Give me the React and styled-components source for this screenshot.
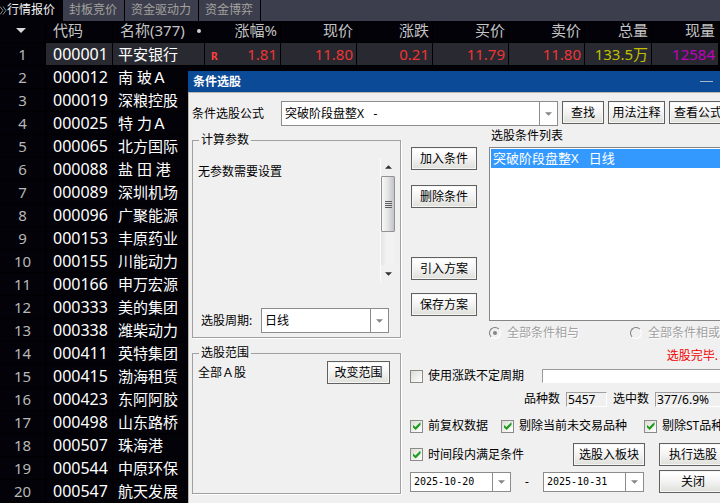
import React from "react";
import styled, { createGlobalStyle, css } from "styled-components";

const Global = createGlobalStyle`
  *, *::before, *::after { box-sizing: border-box; }
  body {
    margin: 0;
    background: #020208;
    font-family: "Noto Sans", "Noto Sans CJK SC", sans-serif;
    font-size: 12px;
    line-height: 16px;
    overflow: hidden;
  }
  button, input, select { font: inherit; color: inherit; margin: 0; }
`;

const Desktop = styled.div`
  position: relative;
  height: 100vh;
  overflow: hidden;
  background: #020208;
`;

/* ---------- quote board ---------- */

const TabBar = styled.nav`
  display: flex;
  gap: 1px;
  height: 21px;
  background: #000;
`;

const Tab = styled.button`
  display: flex;
  align-items: center;
  flex: none;
  height: 21px;
  padding: 0 7px 1px 6px;
  border: 0;
  white-space: nowrap;
  background: ${(p) => (p.$active ? "#020208" : "#3c3e4d")};
  color: ${(p) => (p.$active ? "#f4f4f4" : "#a2a29e")};
  ${(p) => p.$active && css`padding: 0 7px 1px 0;`}
`;

const TabFill = styled.div`
  flex: 1;
  background: #3c3e4d;
`;

const Board = styled.table`
  width: 100%;
  table-layout: fixed;
  border-collapse: separate;
  border-spacing: 0;
  font-size: 15px;
  line-height: 20px;
  color: #fff;
`;

const Col = styled.col`
  width: ${(p) => p.$w}px;
`;

const cell = css`
  height: 23px;
  padding: 0 3px 0 ${(p) => p.$pad || 0}px;
  border-right: 1px solid #000;
  border-bottom: 1px solid #000;
  text-align: ${(p) => p.$align || "left"};
  font-weight: 400;
  white-space: nowrap;
`;

const HeadCell = styled.th`
  ${cell}
  height: 22px;
  padding-bottom: 2px;
  line-height: 19px;
  color: #c4c4c4;
`;

const SortMark = styled.svg`
  display: block;
  margin: 0 auto;
`;

const Cell = styled.td`
  ${cell}
  color: ${(p) => p.$color || "#fff"};
  background: ${(p) => (p.$lit ? "#292a31" : "transparent")};
`;

const IndexCell = styled(Cell)`
  padding: 0;
  text-align: center;
  color: #b8b8b8;
`;

const CodeCell = styled(Cell)`
  font-size: 16px;
`;

const HeadSplit = styled.span`
  display: flex;
  align-items: center;
  justify-content: space-between;
`;

const Dot = styled.i`
  width: 4px;
  height: 4px;
  border-radius: 2px;
  background: #d0d0d0;
`;

const FlagMark = styled.b`
  padding-top: 6px;
  font: 700 11px/14px "DejaVu Sans Mono", monospace;
  color: #ff4040;
`;

/* ---------- dialog shell ---------- */

const Dialog = styled.section`
  position: absolute;
  top: 71px;
  left: 188px;
  width: 546px;
  background: #f0f0f0;
  color: #000;
`;

const TitleBar = styled.header`
  display: flex;
  align-items: center;
  justify-content: space-between;
  height: 21px;
  padding: 0 21px 0 5px;
  background: #0b4a97;
  color: #fff;
`;

const Title = styled.h1`
  margin: 0;
  font-size: 12px;
  font-weight: 700;
`;

const Minimize = styled.button`
  width: 13px;
  height: 1px;
  padding: 0;
  border: 0;
  background: #a9b6c8;
`;

const Body = styled.form`
  display: flex;
  flex-direction: column;
  gap: 2px;
  padding: 8px 7px 12px 3px;
  border-top: 1px solid #b9b5aa;
  border-left: 1px solid #b9b5aa;
`;

const FormulaRow = styled.div`
  display: flex;
  gap: 4px;
`;

const FormulaField = styled.div`
  display: flex;
  align-items: center;
  flex: 1;
`;

const FieldLabel = styled.label`
  flex: none;
  width: ${(p) => p.$w}px;
`;

const Columns = styled.div`
  display: flex;
  gap: 9px;
`;

const LeftColumn = styled.div`
  display: flex;
  flex: none;
  flex-direction: column;
  gap: 7px;
  width: 209px;
  padding-top: 4px;
`;

const RightColumn = styled.div`
  flex: 1;
  display: flex;
  flex-direction: column;
  min-width: 0;
`;

/* ---------- controls ---------- */

const PushButton = styled.button`
  flex: none;
  width: ${(p) => p.$w}px;
  height: 23px;
  padding: 0;
  border: 1px solid #606060;
  background: linear-gradient(#ffffff 10%, #f3f3f3 50%, #dedfd9);
  box-shadow: inset 0 0 0 1px #f6f6f4;
  text-align: center;
  line-height: 20px;
  white-space: nowrap;
`;

const ComboBox = styled.div`
  position: relative;
  flex: 1;
  height: 25px;
`;

const ComboSelect = styled.select`
  appearance: none;
  width: 100%;
  height: 25px;
  padding: 0 20px 0 3px;
  border: 1px solid #8c8c8c;
  border-radius: 0;
  background: #fff;
`;

const ComboArrow = styled.span`
  position: absolute;
  top: 0;
  right: 0;
  display: grid;
  place-items: center;
  width: 19px;
  height: 25px;
  border: 1px solid #8c8c8c;
  pointer-events: none;
`;

const Triangle = ({ size = 7, color = "#868686", up = false }) => (
  <svg width={size} height="4" viewBox="0 0 8 4" aria-hidden="true">
    <path d={up ? "M4 0L8 4H0Z" : "M0 0H8L4 4Z"} fill={color} />
  </svg>
);

const Combo = ({ id, value }) => (
  <ComboBox>
    <ComboSelect id={id} defaultValue={value}>
      <option>{value}</option>
    </ComboSelect>
    <ComboArrow>
      <Triangle />
    </ComboArrow>
  </ComboBox>
);

const Group = styled.fieldset`
  min-width: 0;
  height: ${(p) => p.$h}px;
  margin: 0;
  padding: 0;
  border: 1px solid #a0a0a0;
  box-shadow: 1px 1px 0 #fff;
`;

const Legend = styled.legend`
  margin-left: 6px;
  padding: 0 2px;
`;

const ParamArea = styled.div`
  display: flex;
  justify-content: space-between;
  height: 125px;
  margin: 10px 5px 25px;
`;

const ParamText = styled.p`
  margin: 6px 0 0;
`;

const ScrollTrack = styled.div`
  display: flex;
  flex-direction: column;
  width: 15px;
  border-left: 1px solid #fbfbfb;
  background: linear-gradient(90deg, #e4e4e4, #f2f2f2 40%);
`;

const ScrollButton = styled.button`
  display: grid;
  place-items: center;
  height: 18px;
  padding: 0;
  border: 0;
  background: #f0f0f0;
`;

const ScrollThumb = styled.div`
  display: flex;
  flex-direction: column;
  align-items: center;
  justify-content: center;
  gap: 1px;
  height: 56px;
  border: 1px solid #929292;
  border-radius: 1px;
  background: linear-gradient(90deg, #f8f8f8, #e6e6e8 45%, #c2c4c8);
`;

const Grip = styled.i`
  width: 7px;
  height: 1px;
  background: #5d5d5d;
`;

const PeriodRow = styled.div`
  display: flex;
  align-items: center;
  padding: 0 11px 0 8px;
`;

const ScopeRow = styled.div`
  display: flex;
  align-items: center;
  justify-content: space-between;
  padding: 0 10px 0 5px;
`;

const ConditionArea = styled.div`
  display: flex;
  gap: 12px;
  padding-left: 1px;
`;

const ActionStack = styled.div`
  display: flex;
  flex-direction: column;
  gap: 49px;
  padding-top: 19px;
`;

const ActionPair = styled.div`
  display: flex;
  flex-direction: column;
  gap: ${(p) => p.$gap}px;
`;

const ListPane = styled.div`
  flex: 1;
`;

const ListCaption = styled.div`
  padding-left: 2px;
`;

const ConditionList = styled.ul`
  height: 174px;
  margin: 3px 0 4px;
  padding: 1px;
  border: 1px solid #868686;
  background: #fff;
  list-style: none;
`;

const ConditionItem = styled.li`
  height: 19px;
  padding-left: 2px;
  background: #3399ff;
  color: #fff;
  font-size: 13px;
  line-height: 19px;
  white-space: pre;
`;

const RadioRow = styled.div`
  display: grid;
  grid-template-columns: 141px auto;
`;

const Choice = styled.label`
  display: flex;
  align-items: center;
  gap: 5px;
  white-space: nowrap;
  ${(p) =>
    p.$off &&
    css`
      gap: 6px;
      color: #a0a0a0;
      text-shadow: 1px 1px 0 #fff;
    `}
`;

const Radio = styled.input`
  appearance: none;
  display: grid;
  place-items: center;
  width: 12px;
  height: 12px;
  border: 1px solid;
  border-color: #7c7c7c #fff #fff #7c7c7c;
  border-radius: 50%;
  &:checked::before {
    content: "";
    width: 4px;
    height: 4px;
    border-radius: 50%;
    background: #868686;
  }
`;

const CheckBox = styled.input`
  appearance: none;
  display: grid;
  place-items: center;
  flex: none;
  width: 13px;
  height: 13px;
  border: 1px solid #8a8a86;
  background: linear-gradient(135deg, #dcdcd6, #fff);
  &:checked::before {
    content: "";
    width: 8px;
    height: 8px;
    background: #1c9d1c;
    clip-path: polygon(0 30%, 36% 62%, 100% 0, 100% 36%, 40% 100%, 0 64%);
  }
`;

const StatusLine = styled.output`
  margin-top: 7px;
  padding-right: 9px;
  color: #f00000;
  text-align: right;
`;

const OptionRow = styled.div`
  display: flex;
  align-items: center;
  gap: ${(p) => p.$gap || 0}px;
  margin-top: ${(p) => p.$top}px;
`;

const CountRow = styled(OptionRow)`
  padding-left: 114px;
`;

const CheckGrid = styled.div`
  display: grid;
  grid-template-columns: 91px 143px auto;
  margin-top: 11px;
`;

const Progress = styled.div`
  flex: 1;
  height: 14px;
  margin-left: 18px;
  border: 1px solid;
  border-color: #9a9a9a #fff #fff #9a9a9a;
  background: #fff;
`;

const CountField = styled.input`
  ${(p) => (p.$w ? css`width: ${p.$w}px;` : css`flex: 1; min-width: 0;`)}
  height: 15px;
  padding: 0 1px;
  border: 1px solid;
  border-color: #a0a0a0 #fff #fff #a0a0a0;
  border-radius: 0;
  background: #f0f0f0;
  line-height: 13px;
`;

const Push = styled.span`
  flex: 1;
`;

const DateBox = styled.div`
  display: flex;
  width: 101px;
  height: 20px;
  border: 1px solid #8c8c8c;
  background: #fff;
`;

const DateInput = styled.input`
  flex: 1;
  min-width: 0;
  padding: 0 0 0 3px;
  border: 0;
  background: #fff;
  font: 10px/16px "DejaVu Sans Mono", monospace;
`;

const DateButton = styled.button`
  display: grid;
  place-items: center;
  width: 18px;
  padding: 0;
  border: 0;
  border-left: 1px solid #8c8c8c;
  background: #fff;
`;

const DateDash = styled.span`
  width: 32px;
  text-align: center;
`;

const DateField = ({ label, value }) => (
  <DateBox>
    <DateInput aria-label={label} defaultValue={value} />
    <DateButton type="button" aria-label={label + "▾"}>
      <Triangle />
    </DateButton>
  </DateBox>
);

const Check = ({ label, on }) => (
  <Choice>
    <CheckBox type="checkbox" defaultChecked={on} />
    {label}
  </Choice>
);

/* ---------- data ---------- */

const RED = "#f03434";

const stocks = [
  ["000001", "平安银行"],
  ["000012", "南 玻Ａ"],
  ["000019", "深粮控股"],
  ["000025", "特 力Ａ"],
  ["000065", "北方国际"],
  ["000088", "盐 田 港"],
  ["000089", "深圳机场"],
  ["000096", "广聚能源"],
  ["000153", "丰原药业"],
  ["000155", "川能动力"],
  ["000166", "申万宏源"],
  ["000333", "美的集团"],
  ["000338", "潍柴动力"],
  ["000411", "英特集团"],
  ["000415", "渤海租赁"],
  ["000423", "东阿阿胶"],
  ["000498", "山东路桥"],
  ["000507", "珠海港"],
  ["000544", "中原环保"],
  ["000547", "航天发展"],
];

const quotes = [
  ["涨幅%", "1.81", RED],
  ["现价", "11.80", RED],
  ["涨跌", "0.21", RED],
  ["买价", "11.79", RED],
  ["卖价", "11.80", RED],
  ["总量", "133.5万", "#c0c000"],
  ["现量", "12584", "#c000c0"],
];

const columnWidths = [46, 67, 92, 76, 76, 76, 76, 76, 67, 67];

const QuoteBoard = () => (
  <Board>
    <colgroup>
      {columnWidths.map((w, i) => (
        <Col key={i} $w={w} />
      ))}
      <col />
    </colgroup>
    <thead>
      <tr>
        <HeadCell>
          <SortMark width="10" height="5" viewBox="0 0 10 5" aria-hidden="true">
            <path d="M0 0H10L5 5Z" fill="#d8d8d8" />
          </SortMark>
        </HeadCell>
        <HeadCell $pad={7}>代码</HeadCell>
        <HeadCell $pad={7}>
          <HeadSplit>
            名称(377) <Dot />
          </HeadSplit>
        </HeadCell>
        {quotes.map(([name]) => (
          <HeadCell key={name} $align="right">
            {name}
          </HeadCell>
        ))}
        <HeadCell />
      </tr>
    </thead>
    <tbody>
      {stocks.map(([code, name], row) => (
        <tr key={code}>
          <IndexCell>{row + 1}</IndexCell>
          <CodeCell $pad={7} $lit={row === 0}>
            {code}
          </CodeCell>
          <Cell $pad={5} $lit={row === 0}>
            {name}
          </Cell>
          {quotes.map(([head, value, color], i) => (
            <Cell key={head} $align="right" $pad={6} $lit={row === 0} $color={color}>
              {row === 0 &&
                (i === 0 ? (
                  <HeadSplit>
                    <FlagMark>R</FlagMark>
                    {value}
                  </HeadSplit>
                ) : (
                  value
                ))}
            </Cell>
          ))}
          <Cell $lit={row === 0} />
        </tr>
      ))}
    </tbody>
  </Board>
);

const Chevrons = () => (
  <svg width="7" height="9" viewBox="0 0 7 9" fill="none" stroke="#8a8a8a" aria-hidden="true">
    <path d="M0 0.5L3 4.5L0 8.5M3 0.5L6 4.5L3 8.5" />
  </svg>
);

export default function App() {
  return (
    <Desktop>
      <Global />
      <TabBar>
        <Tab $active>
          <Chevrons />
          行情报价
        </Tab>
        <Tab>封板竞价</Tab>
        <Tab>资金驱动力</Tab>
        <Tab>资金博弈</Tab>
        <TabFill />
      </TabBar>
      <QuoteBoard />

      <Dialog role="dialog" aria-labelledby="dialog-title">
        <TitleBar>
          <Title id="dialog-title">条件选股</Title>
          <Minimize aria-label="最小化" />
        </TitleBar>
        <Body onSubmit={(e) => e.preventDefault()}>
          <FormulaRow>
            <FormulaField>
              <FieldLabel htmlFor="formula" $w={89}>
                条件选股公式
              </FieldLabel>
              <Combo id="formula" value={"突破阶段盘整X\u00a0\u00a0\u00a0-"} />
            </FormulaField>
            <PushButton type="button" $w={42}>查找</PushButton>
            <PushButton type="button" $w={57}>用法注释</PushButton>
            <PushButton type="button" $w={58}>查看公式</PushButton>
          </FormulaRow>

          <Columns>
            <LeftColumn>
              <Group $h={206}>
                <Legend>计算参数</Legend>
                <ParamArea>
                  <ParamText>无参数需要设置</ParamText>
                  <ScrollTrack>
                    <ScrollButton type="button" aria-label="向上">
                      <Triangle up color="#303030" />
                    </ScrollButton>
                    <ScrollThumb>
                      <Grip />
                      <Grip />
                      <Grip />
                      <Grip />
                    </ScrollThumb>
                    <Push />
                    <ScrollButton type="button" aria-label="向下">
                      <Triangle color="#303030" />
                    </ScrollButton>
                  </ScrollTrack>
                </ParamArea>
                <PeriodRow>
                  <FieldLabel htmlFor="period" $w={60}>
                    选股周期:
                  </FieldLabel>
                  <Combo id="period" value="日线" />
                </PeriodRow>
              </Group>
              <Group $h={149}>
                <Legend>选股范围</Legend>
                <ScopeRow>
                  全部Ａ股
                  <PushButton type="button" $w={63}>改变范围</PushButton>
                </ScopeRow>
              </Group>
            </LeftColumn>

            <RightColumn>
              <ConditionArea>
                <ActionStack>
                  <ActionPair $gap={15}>
                    <PushButton type="button" $w={66}>加入条件</PushButton>
                    <PushButton type="button" $w={66}>删除条件</PushButton>
                  </ActionPair>
                  <ActionPair $gap={13}>
                    <PushButton type="button" $w={66}>引入方案</PushButton>
                    <PushButton type="button" $w={66}>保存方案</PushButton>
                  </ActionPair>
                </ActionStack>
                <ListPane>
                  <ListCaption id="list-caption">选股条件列表</ListCaption>
                  <ConditionList role="listbox" aria-labelledby="list-caption">
                    <ConditionItem role="option" aria-selected="true">
                      {"突破阶段盘整X   日线"}
                    </ConditionItem>
                  </ConditionList>
                  <RadioRow>
                    <Choice $off>
                      <Radio type="radio" name="join" defaultChecked disabled />
                      全部条件相与
                    </Choice>
                    <Choice $off>
                      <Radio type="radio" name="join" disabled />
                      全部条件相或
                    </Choice>
                  </RadioRow>
                </ListPane>
              </ConditionArea>

              <StatusLine>选股完毕.</StatusLine>
              <OptionRow $top={4}>
                <Check label="使用涨跌不定周期" />
                <Progress />
              </OptionRow>
              <CountRow $top={7} $gap={6}>
                <label htmlFor="total">品种数</label>
                <CountField id="total" $w={41} readOnly value="5457" />
                <label htmlFor="hits">选中数</label>
                <CountField id="hits" readOnly value="377/6.9%" />
              </CountRow>
              <CheckGrid>
                <Check label="前复权数据" on />
                <Check label="剔除当前未交易品种" on />
                <Check label="剔除ST品种" on />
              </CheckGrid>
              <OptionRow $top={9}>
                <Check label="时间段内满足条件" on />
                <Push />
                <OptionRow $top={0} $gap={14}>
                  <PushButton type="button" $w={72}>选股入板块</PushButton>
                  <PushButton type="submit" $w={68}>执行选股</PushButton>
                </OptionRow>
              </OptionRow>
              <OptionRow $top={4}>
                <DateField label="开始日期" value="2025-10-20" />
                <DateDash>-</DateDash>
                <DateField label="结束日期" value="2025-10-31" />
                <Push />
                <PushButton type="button" $w={68}>关闭</PushButton>
              </OptionRow>
            </RightColumn>
          </Columns>
        </Body>
      </Dialog>
    </Desktop>
  );
}
